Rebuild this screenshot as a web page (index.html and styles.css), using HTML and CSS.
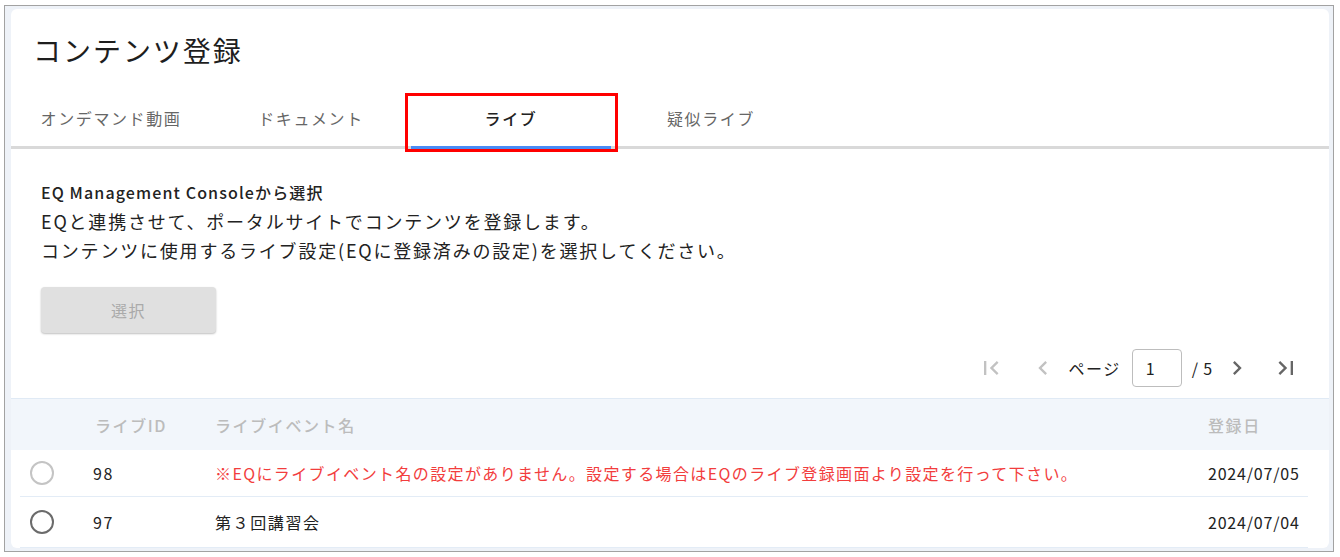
FILE: index.html
```html
<!DOCTYPE html>
<html lang="ja">
<head>
<meta charset="utf-8">
<title>コンテンツ登録</title>
<link rel="stylesheet" href="styles.css">
</head>
<body>
<div class="frame">
  <div class="card">
    <h1 class="title">コンテンツ登録</h1>
    <div class="tabs">
      <div class="tab">オンデマンド動画</div>
      <div class="tab">ドキュメント</div>
      <div class="tab active">ライブ<span class="highlight"></span></div>
      <div class="tab">疑似ライブ</div>
    </div>
    <div class="content">
      <p class="lead">EQ Management Consoleから選択</p>
      <p class="desc">EQと連携させて、ポータルサイトでコンテンツを登録します。</p>
      <p class="desc">コンテンツに使用するライブ設定(EQに登録済みの設定)を選択してください。</p>
      <button class="btn" disabled>選択</button>
    </div>
    <div class="pager">
      <span class="icon disabled first"><svg viewBox="0 0 24 24" width="28" height="28"><path d="M18.41 16.59L13.82 12l4.59-4.59L17 6l-6 6 6 6zM6 6h2v12H6z"/></svg></span>
      <span class="icon disabled prev"><svg viewBox="0 0 24 24" width="28" height="28"><path d="M15.41 7.41L14 6l-6 6 6 6 1.41-1.41L10.83 12z"/></svg></span>
      <span class="pg-label">ページ</span>
      <span class="pg-input">1</span>
      <span class="pg-total">/ 5</span>
      <span class="icon next"><svg viewBox="0 0 24 24" width="28" height="28"><path d="M10 6L8.59 7.41 13.17 12l-4.58 4.59L10 18l6-6z"/></svg></span>
      <span class="icon last"><svg viewBox="0 0 24 24" width="28" height="28"><path d="M5.59 7.41L10.18 12l-4.59 4.59L7 18l6-6-6-6zM16 6h2v12h-2z"/></svg></span>
    </div>
    <div class="table">
      <div class="thead">
        <div></div>
        <div>ライブID</div>
        <div>ライブイベント名</div>
        <div>登録日</div>
      </div>
      <div class="row">
        <div><span class="radio light"></span></div>
        <div>98</div>
        <div class="warn">※EQにライブイベント名の設定がありません。設定する場合はEQのライブ登録画面より設定を行って下さい。</div>
        <div class="date">2024/07/05</div>
      </div>
      <div class="row">
        <div><span class="radio"></span></div>
        <div>97</div>
        <div>第３回講習会</div>
        <div class="date">2024/07/04</div>
      </div>
    </div>
  </div>
</div>
</body>
</html>
```

FILE: styles.css
```css
* { box-sizing: border-box; }
html, body { margin: 0; padding: 0; background: #ffffff; }
body {
  font-family: "Noto Sans CJK JP", "Noto Sans", sans-serif;
  color: #222;
}
.frame {
  margin: 5px 0 0 4px;
  width: 1330px;
  height: 547px;
  border: 1px solid #a2a2a2;
  background: #eef2f8;
  padding: 3px 4px 3px 6px;
}
.card {
  background: #fff;
  border-radius: 6px;
  height: 539px;
  overflow: hidden;
  padding-top: 21px;
}
.title {
  margin: 0 0 26px 22px;
  font-size: 28px;
  line-height: 40px;
  font-weight: 400;
  letter-spacing: 0.07em;
  color: #1e1e1e;
}
.tabs {
  display: flex;
  border-bottom: 3px solid #d9d9d9;
}
.tab {
  position: relative;
  width: 200px;
  text-align: center;
  font-size: 16px;
  line-height: 24px;
  letter-spacing: 0.1em;
  color: #666;
  padding: 10px 0 16px;
  margin-bottom: -3px;
  border-bottom: 3px solid transparent;
}
.tab.active {
  color: #222;
  font-weight: 500;
  border-bottom-color: #4a8cf6;
}
.highlight {
  position: absolute;
  left: -6px;
  right: -7px;
  top: -3px;
  bottom: -6px;
  border: 3px solid #ff0000;
}
.content {
  padding: 29px 30px 0;
}
.content p { margin: 0; }
.lead {
  font-size: 16px;
  line-height: 29px;
  font-weight: 500;
  letter-spacing: 0.07em;
  color: #222;
}
.desc {
  font-size: 18px;
  line-height: 29px;
  letter-spacing: 0.1em;
  color: #222;
}
.btn {
  display: block;
  margin-top: 22px;
  width: 175px;
  height: 46px;
  border: none;
  border-radius: 4px;
  background: #e0e0e0;
  color: #aaa;
  font-family: inherit;
  font-size: 16px;
  letter-spacing: 0.1em;
  box-shadow: 0 1px 2px rgba(0,0,0,0.25);
}
.pager {
  display: flex;
  align-items: center;
  justify-content: flex-end;
  padding-right: 29px;
  margin-top: 16px;
  height: 38px;
  font-size: 16px;
  letter-spacing: 0.1em;
}
.icon { display: flex; width: 28px; height: 28px; fill: #666; }
.icon.disabled { fill: #c2c2c2; }
.first { margin-right: 24px; }
.prev { margin-right: 11px; }
.pg-label { margin-right: 11px; }
.pg-input {
  width: 50px;
  height: 38px;
  border: 1px solid #bdbdbd;
  border-radius: 4px;
  padding-left: 13px;
  line-height: 36px;
  margin-right: 10px;
}
.pg-total { margin-right: 10px; letter-spacing: 0.05em; }
.next { margin-right: 21px; }
.table { margin-top: 11px; }
.thead, .row {
  display: grid;
  grid-template-columns: 73px 122px 1fr 100px;
  align-items: center;
  font-size: 16px;
  letter-spacing: 0.1em;
}
.thead {
  height: 52px;
  padding: 0 21px 0 9px;
  background: #f2f6fb;
  border-top: 1px solid #e0eaf5;
  color: #bcbcbc;
  font-weight: 500;
}
.thead > div:nth-child(2) { padding-left: 2px; }
.row {
  height: 47px;
  margin: 0 21px 0 9px;
  border-bottom: 1px solid #e3ecf6;
  color: #222;
}
.row + .row { height: 51px; }
.radio {
  display: block;
  width: 24px;
  height: 24px;
  margin-left: 10px;
  border: 2px solid #6b6b6b;
  border-radius: 50%;
}
.radio.light { border-color: #c4c4c4; }
.warn { color: #f23d3d; letter-spacing: 0.086em; }
.date { letter-spacing: 0.05em; }
```
